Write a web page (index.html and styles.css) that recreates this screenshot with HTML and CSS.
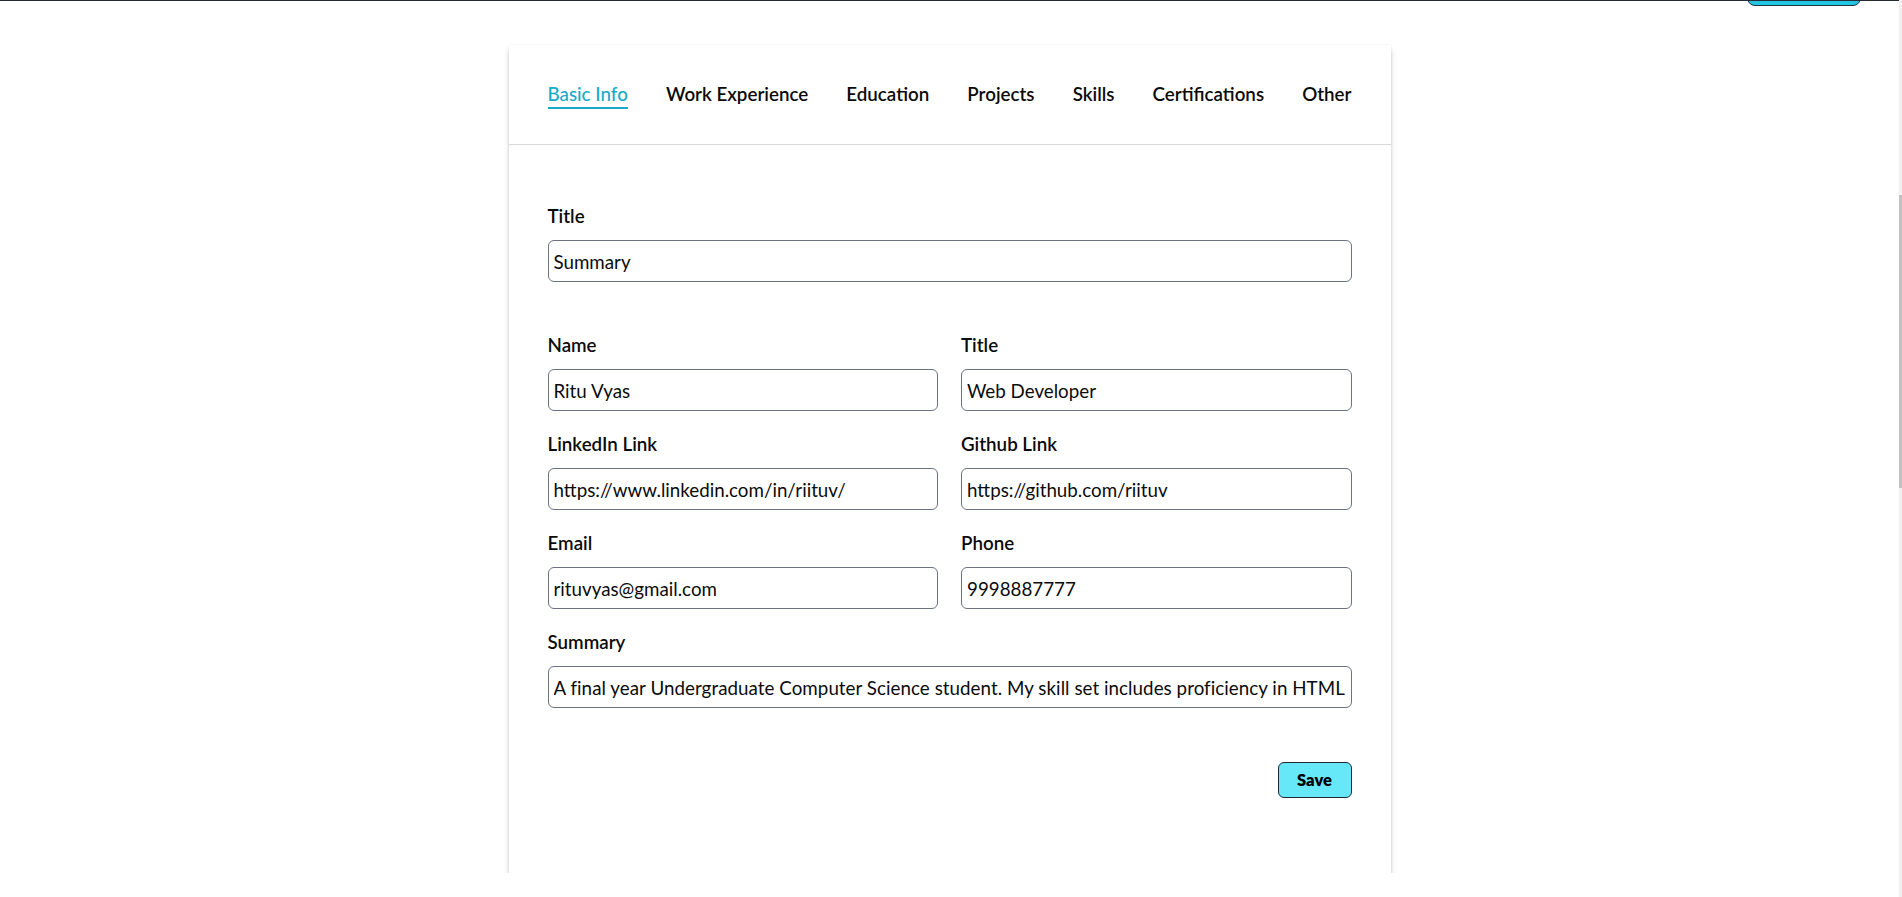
FILE: index.html
```html
<!DOCTYPE html>
<html lang="en">
<head>
<meta charset="utf-8">
<title>Resume Builder</title>
<link rel="stylesheet" href="styles.css">
</head>
<body>
<div class="topbar">
  <button class="top-btn" type="button" aria-label="Download"></button>
</div>

<main class="card">
  <nav class="tabs">
    <span class="tab active">Basic Info</span>
    <span class="tab">Work Experience</span>
    <span class="tab">Education</span>
    <span class="tab">Projects</span>
    <span class="tab">Skills</span>
    <span class="tab">Certifications</span>
    <span class="tab">Other</span>
  </nav>

  <form class="form">
    <div class="field">
      <label class="label">Title</label>
      <input class="input" type="text" value="Summary">
    </div>

    <div class="grid">
      <div class="field">
        <label class="label">Name</label>
        <input class="input" type="text" value="Ritu Vyas">
      </div>
      <div class="field">
        <label class="label">Title</label>
        <input class="input" type="text" value="Web Developer">
      </div>
      <div class="field">
        <label class="label">LinkedIn Link</label>
        <input class="input" type="text" value="https://www.linkedin.com/in/riituv/">
      </div>
      <div class="field">
        <label class="label">Github Link</label>
        <input class="input" type="text" value="https://github.com/riituv">
      </div>
      <div class="field">
        <label class="label">Email</label>
        <input class="input" type="text" value="rituvyas@gmail.com">
      </div>
      <div class="field">
        <label class="label">Phone</label>
        <input class="input" type="text" value="9998887777">
      </div>
      <div class="field span2">
        <label class="label">Summary</label>
        <input class="input summary" type="text" value="A final year Undergraduate Computer Science student. My skill set includes proficiency in HTML and CSS, JavaScript and React.">
      </div>
    </div>

    <div class="actions">
      <button class="save" type="button">Save</button>
    </div>
  </form>
</main>

<div class="scrollbar"><div class="thumb"></div></div>
</body>
</html>
```
FILE: styles.css
```css
* { box-sizing: border-box; }

html, body { background: #ffffff; }

body {
  margin: 0 3px 0 0;
  font-family: "Lato", "Open Sans", sans-serif;
  color: #0b0b0b;
}

.topbar {
  height: 6px;
  border-top: 1px solid #262a35;
  overflow: hidden;
  display: flex;
  justify-content: flex-end;
  align-items: flex-end;
  padding-right: 38px;
}

.top-btn {
  flex: none;
  width: 114px;
  height: 40px;
  background: #22c5e1;
  border: 1px solid #1d3340;
  border-radius: 8px;
  padding: 0;
}

.card {
  width: 882px;
  margin: 39px auto 0;
  background: #ffffff;
  box-shadow: 0 1px 0 rgba(17, 24, 39, 0.1), 0 4px 6px -1px rgba(17, 24, 39, 0.25), 0 2px 4px -2px rgba(17, 24, 39, 0.18), 0 0 2px rgba(0, 0, 0, 0.06);
}

.tabs {
  display: flex;
  justify-content: space-between;
  align-items: flex-start;
  padding: 37px 39px 0;
  height: 100px;
  border-bottom: 1px solid #d6d6db;
}

.tab {
  font-size: 18.75px;
  font-weight: 600;
  line-height: 24px;
  padding-bottom: 1px;
  border-bottom: 2px solid transparent;
  color: #0b0b0b;
  white-space: nowrap;
}

.tab.active {
  color: #17abc9;
  font-weight: 500;
  border-bottom-color: #17abc9;
}

.form {
  margin: 0;
  padding: 55px 39px 75px;
}

.field {
  display: flex;
  flex-direction: column;
  gap: 9px;
}

.label {
  font-size: 18.75px;
  font-weight: 600;
  line-height: 30px;
  padding-top: 1px;
  color: #0b0b0b;
}

.input {
  height: 42px;
  width: 100%;
  border: 1px solid #6b7280;
  border-radius: 6px;
  padding: 0 5px;
  font-family: "Lato", "Open Sans", sans-serif;
  font-size: 18.75px;
  color: #0b0b0b;
  background: #ffffff;
  outline: none;
}

.input.summary {
  letter-spacing: 0.045px;
}

.grid {
  margin-top: 47px;
  display: grid;
  grid-template-columns: 1fr 1fr;
  column-gap: 23px;
  row-gap: 17px;
}

.span2 { grid-column: 1 / -1; }

.actions {
  display: flex;
  justify-content: flex-end;
  margin-top: 54px;
}

.save {
  width: 74px;
  height: 36px;
  background: #67e8f9;
  border: 1px solid #1f2937;
  border-radius: 6px;
  font-family: "Lato", "Open Sans", sans-serif;
  font-weight: 800;
  font-size: 16.5px;
  color: #000000;
  padding: 0;
}

.scrollbar {
  position: fixed;
  top: 0;
  right: 0;
  width: 3px;
  height: 100%;
  background: #f1f1f1;
}

.thumb {
  margin-top: 195px;
  height: 293px;
  background: #c1c1c1;
}
```
